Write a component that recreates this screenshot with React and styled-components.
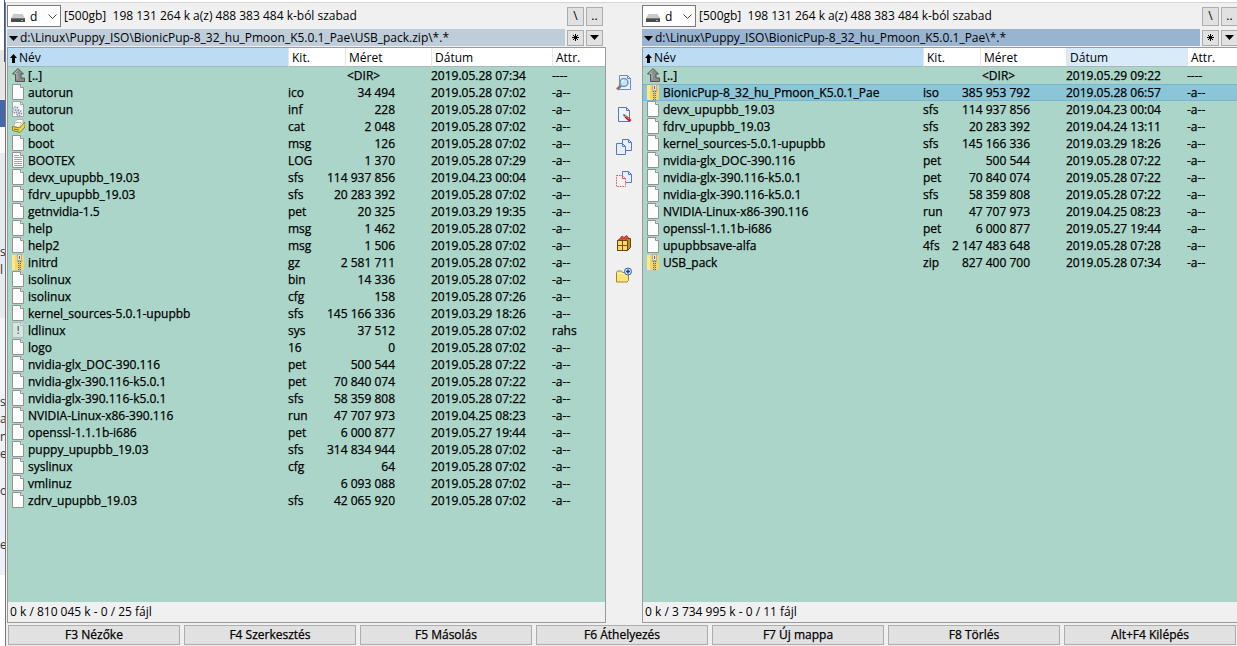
import React from "react";
import styled, { createGlobalStyle, css } from "styled-components";

const GlobalStyle = createGlobalStyle`
  *, *::before, *::after { box-sizing: border-box; }
  body {
    margin: 0;
    background: #fff;
    color: #000;
    font: 12px/16px "Open Sans", "Noto Sans", sans-serif;
    font-variant-ligatures: none;
    overflow: hidden;
  }
  button, select { font: inherit; color: inherit; }
`;

const Screen = styled.div`
  display: flex;
  min-height: 100vh;
  margin-right: -4px;
`;

const Backdrop = styled.div`
  flex: none;
  width: 5px;
  padding-bottom: 71px;
  display: flex;
  flex-direction: column;
`;

const Strip = styled.div`
  flex: none;
  height: ${(p) => p.$height}px;
  background: ${(p) => p.$color};
  border-right: ${(p) => (p.$edge ? "1px solid #3d5798" : "0")};
  color: #333;
  overflow: hidden;
  white-space: nowrap;
  line-height: 18px;
`;

const Window = styled.main`
  flex: 1;
  min-width: 0;
  display: flex;
  flex-direction: column;
  margin-top: 2px;
  padding: 2px 0 1px 1px;
  background: #f0f0f0;
  border-top: 1px solid #d4d4d4;
  border-left: 1px solid #777;
`;

const Panes = styled.div`
  flex: 1;
  display: flex;
`;

const Pane = styled.section`
  flex: 1;
  min-width: 0;
  display: flex;
  flex-direction: column;
`;

const DriveBar = styled.div`
  display: flex;
  align-items: center;
  height: 22px;
  gap: 2px;
  padding-right: 3px;
`;

const DriveBox = styled.label`
  position: relative;
  width: 54px;
  height: 22px;
  margin-right: 1px;

  svg { position: absolute; pointer-events: none; }
  svg:first-of-type { left: 4px; top: 9px; }
  svg:last-of-type { right: 4px; top: 8px; }
`;

const DriveSelect = styled.select`
  appearance: none;
  width: 100%;
  height: 100%;
  padding: 1px 16px 0 22px;
  background: #fff;
  border: 1px solid #7a7a7a;
  border-radius: 0;
`;

const FreeSpace = styled.span`
  flex: 1;
  white-space: pre;
`;

const PathRow = styled.div`
  display: flex;
  align-items: center;
  gap: 2px;
  height: 17px;
  margin: 2px 0 1px;
  padding-right: 3px;
`;

const PathBar = styled.button`
  flex: 1;
  min-width: 0;
  height: 17px;
  display: flex;
  align-items: center;
  gap: 2px;
  padding: 0 2px;
  border: 0;
  background: ${(p) => (p.$active ? "#99b4d1" : "#bfcddb")};
  white-space: nowrap;

  svg { margin-top: 2px; }
`;

const SmallButton = styled.button`
  flex: none;
  width: 17px;
  height: ${(p) => (p.$tall ? 19 : 16)}px;
  display: flex;
  align-items: center;
  justify-content: center;
  padding: 0;
  border: 1px solid #adadad;
  background: #e1e1e1;
`;

const Frame = styled.div`
  flex: 1;
  display: flex;
  flex-direction: column;
  border: 1px solid #9a9a9a;
`;

const ListArea = styled.div`
  flex: 1;
  background: #abd5c9;
`;

const FileTable = styled.table`
  width: 100%;
  table-layout: fixed;
  border-collapse: separate;
  border-spacing: 0;
  white-space: nowrap;
`;

const Column = styled.col`
  width: ${(p) => (p.$width ? `${p.$width}px` : "auto")};
`;

const HeadCell = styled.th`
  height: 19px;
  padding: 1px 3px 0;
  border-bottom: 1px solid #a8b8b8;
  border-left: ${(p) => (p.$first ? "0" : "1px solid #e5e5e5")};
  background: ${(p) => (p.$first ? "#bbdcf3" : p.$hover ? "#d9ebf9" : "#fff")};
  font-weight: 400;
  text-align: left;

  svg { margin-right: 2px; vertical-align: -1px; }
  ${(p) => p.$first && css`padding-left: 2px;`}
`;

const Row = styled.tr`
  -webkit-text-stroke: 0.25px #000;
  ${(p) =>
    p.$selected &&
    css`
      background: #8bc5d8;
      td { box-shadow: inset 0 1px #78b5cf, inset 0 -1px #78b5cf; }
    `}
`;

const Cell = styled.td`
  height: 17px;
  padding: 0;
  line-height: 17px;
`;

const NameBox = styled.div`
  display: flex;
  height: 17px;
  gap: 3px;
  padding-left: 4px;
  svg { flex: none; }
`;

const SizeBox = styled.div`
  display: flex;
  justify-content: ${(p) => (p.$dir ? "flex-start" : "flex-end")};
  padding: ${(p) => (p.$dir ? "0 0 0 2px" : "0 36px 0 0")};
`;

const Status = styled.div`
  height: 20px;
  padding: 2px 2px 0;
`;

const ToolColumn = styled.nav`
  flex: none;
  width: 36px;
  display: flex;
  flex-direction: column;
  align-items: center;
  gap: 16px;
  padding-top: 70px;
`;

const ToolButton = styled.button`
  width: 16px;
  height: 16px;
  padding: 0;
  border: 0;
  background: none;
  margin-top: ${(p) => (p.$group ? "32px" : "0")};
  svg { display: block; }
`;

const KeyBar = styled.footer`
  display: grid;
  grid-template-columns: repeat(7, 1fr);
  gap: 4px;
  padding: 2px 5px 0 1px;
`;

const KeyButton = styled.button`
  height: 20px;
  padding: 0;
  line-height: 16px;
  border: 1px solid #adadad;
  background: #e1e1e1;
  -webkit-text-stroke: 0.25px #000;
`;

const DriveIcon = () => (
  <svg width="14" height="8" viewBox="0 0 14 8">
    <path d="M2.5 0h9L14 4H0z" fill="#c9c9c9" />
    <path d="M0 4h14v4H0z" fill="#4b4b4b" />
    <path d="M0 4h14v1H0z" fill="#777" />
    <path d="M10 6h2v1h-2z" fill="#7fd77f" />
  </svg>
);

const Chevron = () => (
  <svg width="9" height="7" viewBox="0 0 9 7">
    <path d="M.5 1.5l4 4 4-4" fill="none" stroke="#444" />
  </svg>
);

const Triangle = () => (
  <svg width="9" height="5" viewBox="0 0 9 5">
    <path d="M0 0h9L4.500 5z" />
  </svg>
);

const SortArrow = () => (
  <svg width="7" height="9" viewBox="0 0 7 9">
    <path d="M3.500 0L7 4H5v5H2V4H0z" />
  </svg>
);

const Sheet = ({ fill = "#fdfdfd", stroke = "#929292", children }) => (
  <svg width="13" height="17" viewBox="0 0 13 17">
    <path d="M.5.5h8l3 3v12H.5z" fill={fill} stroke={stroke} />
    <path d="M8.500.5v3h3" fill="#eee" stroke={stroke} />
    {children}
  </svg>
);

const icons = {
  file: <Sheet />,
  text: (
    <Sheet>
      <path d="M2 3.500h5M2 5.500h8M2 7.500h8M2 9.500h8M2 11.500h8M2 13.500h8" stroke="#a5a5a5" />
    </Sheet>
  ),
  system: (
    <Sheet fill="#d5e5df" stroke="#b0b9b6">
      <path d="M5.500 4h1.500v5H5.500zM5.500 10.500h1.500V12H5.500z" fill="#777" />
    </Sheet>
  ),
  config: (
    <svg width="13" height="17" viewBox="0 0 13 17">
      <path d="M.5.5h8l3 3v12H.5z" fill="#f7f9fa" stroke="#a5a5a5" />
      <path d="M8.500.5v3h3" fill="none" stroke="#a5a5a5" />
      <circle cx="3.500" cy="9" r="3" fill="#e5edf2" stroke="#8494a0" strokeWidth="1.500" strokeDasharray="1.500 1" />
      <circle cx="7" cy="12" r="2.500" fill="#e5edf2" stroke="#8494a0" strokeWidth="1.500" strokeDasharray="1.500 1" />
      <circle cx="3.500" cy="9" r="1" fill="#8798a5" />
      <circle cx="7" cy="12" r="1" fill="#8798a5" />
    </svg>
  ),
  catalog: (
    <svg width="13" height="17" viewBox="0 0 13 17">
      <path d="M2.500 9V3.500l3-2h5.500V9z" fill="#fff" stroke="#b5b5a8" />
      <path d="M1.500 8.500l2-4h6l-2 5z" fill="#fffef0" stroke="#c5c09b" />
      <path d="M.5 8.500l7 1.500L13 4v5l-5 5.500-7.500-2z" fill="#ead94c" stroke="#8c8220" />
      <path d="M2 11l5 1.200" stroke="#756e20" />
    </svg>
  ),
  zip: (
    <svg width="13" height="17" viewBox="0 0 13 17">
      <path d="M0 1h12v15H0z" fill="#f7d664" />
      <path d="M0 1h3v15H0z" fill="#ffe88c" />
      <path d="M5 0h5v8H5z" fill="#b0b0a6" />
      <path d="M6 1h3v5H6z" fill="#e3e3dd" />
      <path d="M7.500 2v3" stroke="#666" />
      <path d="M7.500 7v10" stroke="#6c6c60" strokeWidth="3" strokeDasharray="1 1" />
      <path d="M7.500 7v10" stroke="#bab69b" />
    </svg>
  ),
  up: (
    <svg width="13" height="17" viewBox="0 0 13 17">
      <path d="M6 1.500L11.500 7H9v4h3.500v3.500h-9V7H.5z" fill="#8c8c8c" stroke="#555" />
      <path d="M6 3L2.500 6.500H5v6" fill="none" stroke="#b5b5b5" />
    </svg>
  ),
};

const PageShape = ({ x = 0, y = 0, stroke = "#5878c8", fill = "#e8f0ff", dash }) => (
  <g transform={`translate(${x} ${y})`}>
    <path d="M.5.5h6l3 3v8h-9z" fill={fill} stroke={stroke} strokeDasharray={dash} />
    <path d="M6.500.5v3h3" fill="none" stroke={stroke} />
  </g>
);

const tools = [
  {
    label: "Nézőke",
    icon: (
      <>
        <path d="M3.500.5h8l3 3v11h-11z" fill="#edf4ff" stroke="#6c88d0" />
        <path d="M11.500.5v3h3" fill="none" stroke="#6c88d0" />
        <path d="M1 14.500l4-4" stroke="#8c7863" strokeWidth="3" />
        <circle cx="8" cy="7.500" r="4" fill="#bfe3f7" stroke="#7893b5" strokeWidth="1.500" />
        <path d="M6 7q0-2 2-2" fill="none" stroke="#fff" />
      </>
    ),
  },
  {
    label: "Szerkesztés",
    icon: (
      <>
        <path d="M2.500.5h8l3 3v11h-11z" fill="#edf4ff" stroke="#5875c8" />
        <path d="M10.500.5v3h3" fill="none" stroke="#5875c8" />
        <path d="M9.500 9.500l5 4.500" stroke="#c91820" strokeWidth="3" />
        <path d="M9.500 9l4 3.500" stroke="#f07870" />
        <path d="M7 7l1 3 2-2z" fill="#554" />
      </>
    ),
  },
  {
    label: "Másolás",
    icon: (
      <>
        <PageShape x={6} y={0} />
        <PageShape x={0} y={4} />
      </>
    ),
  },
  {
    label: "Áthelyezés",
    icon: (
      <>
        <PageShape x={6} y={0} />
        <PageShape x={0} y={4} stroke="#e05068" fill="#faf0f2" dash="1.500 1" />
      </>
    ),
  },
  {
    label: "Tömörítés",
    group: true,
    icon: (
      <>
        <path d="M1.500 5.500l3-2h10v9l-3 3h-10z" fill="#c58b18" stroke="#604515" />
        <path d="M1.500 5.500h10v10h-10z" fill="#ffd76a" stroke="#604515" />
        <path d="M6.500 5.500v10M1.500 10.500h10" stroke="#795417" />
        <path d="M4 3.500L6 1l2 1.500L10.500.5l2 2-2 2-2.500-1-3 1z" fill="#ef4545" stroke="#b93a3a" />
      </>
    ),
  },
  {
    label: "Új mappa",
    icon: (
      <>
        <path d="M.5 5.500l1-1.500h4l1 1.500h6v8l-1.500 1.500H.5z" fill="#ffe47d" stroke="#a18438" />
        <path d="M1.500 6.500h10" stroke="#fff3b5" />
        <circle cx="12" cy="4.500" r="3.500" fill="#d8ecff" stroke="#385b9c" />
        <path d="M12 2.500v4M10 4.500h4" stroke="#173f91" strokeWidth="1.500" />
      </>
    ),
  },
];

const leftFiles = [
  ["up", "[..]", "", "<DIR>", "2019.05.28 07:34", "----"],
  ["file", "autorun", "ico", "34 494", "2019.05.28 07:02", "-a--"],
  ["config", "autorun", "inf", "228", "2019.05.28 07:02", "-a--"],
  ["catalog", "boot", "cat", "2 048", "2019.05.28 07:02", "-a--"],
  ["file", "boot", "msg", "126", "2019.05.28 07:02", "-a--"],
  ["text", "BOOTEX", "LOG", "1 370", "2019.05.28 07:29", "-a--"],
  ["file", "devx_upupbb_19.03", "sfs", "114 937 856", "2019.04.23 00:04", "-a--"],
  ["file", "fdrv_upupbb_19.03", "sfs", "20 283 392", "2019.05.28 07:02", "-a--"],
  ["file", "getnvidia-1.5", "pet", "20 325", "2019.03.29 19:35", "-a--"],
  ["file", "help", "msg", "1 462", "2019.05.28 07:02", "-a--"],
  ["file", "help2", "msg", "1 506", "2019.05.28 07:02", "-a--"],
  ["zip", "initrd", "gz", "2 581 711", "2019.05.28 07:02", "-a--"],
  ["file", "isolinux", "bin", "14 336", "2019.05.28 07:02", "-a--"],
  ["file", "isolinux", "cfg", "158", "2019.05.28 07:26", "-a--"],
  ["file", "kernel_sources-5.0.1-upupbb", "sfs", "145 166 336", "2019.03.29 18:26", "-a--"],
  ["system", "ldlinux", "sys", "37 512", "2019.05.28 07:02", "rahs"],
  ["file", "logo", "16", "0", "2019.05.28 07:02", "-a--"],
  ["file", "nvidia-glx_DOC-390.116", "pet", "500 544", "2019.05.28 07:22", "-a--"],
  ["file", "nvidia-glx-390.116-k5.0.1", "pet", "70 840 074", "2019.05.28 07:22", "-a--"],
  ["file", "nvidia-glx-390.116-k5.0.1", "sfs", "58 359 808", "2019.05.28 07:22", "-a--"],
  ["file", "NVIDIA-Linux-x86-390.116", "run", "47 707 973", "2019.04.25 08:23", "-a--"],
  ["file", "openssl-1.1.1b-i686", "pet", "6 000 877", "2019.05.27 19:44", "-a--"],
  ["file", "puppy_upupbb_19.03", "sfs", "314 834 944", "2019.05.28 07:02", "-a--"],
  ["file", "syslinux", "cfg", "64", "2019.05.28 07:02", "-a--"],
  ["file", "vmlinuz", "", "6 093 088", "2019.05.28 07:02", "-a--"],
  ["file", "zdrv_upupbb_19.03", "sfs", "42 065 920", "2019.05.28 07:02", "-a--"],
];

const rightFiles = [
  ["up", "[..]", "", "<DIR>", "2019.05.29 09:22", "----"],
  ["zip", "BionicPup-8_32_hu_Pmoon_K5.0.1_Pae", "iso", "385 953 792", "2019.05.28 06:57", "-a--"],
  ["file", "devx_upupbb_19.03", "sfs", "114 937 856", "2019.04.23 00:04", "-a--"],
  ["file", "fdrv_upupbb_19.03", "sfs", "20 283 392", "2019.04.24 13:11", "-a--"],
  ["file", "kernel_sources-5.0.1-upupbb", "sfs", "145 166 336", "2019.03.29 18:26", "-a--"],
  ["file", "nvidia-glx_DOC-390.116", "pet", "500 544", "2019.05.28 07:22", "-a--"],
  ["file", "nvidia-glx-390.116-k5.0.1", "pet", "70 840 074", "2019.05.28 07:22", "-a--"],
  ["file", "nvidia-glx-390.116-k5.0.1", "sfs", "58 359 808", "2019.05.28 07:22", "-a--"],
  ["file", "NVIDIA-Linux-x86-390.116", "run", "47 707 973", "2019.04.25 08:23", "-a--"],
  ["file", "openssl-1.1.1b-i686", "pet", "6 000 877", "2019.05.27 19:44", "-a--"],
  ["file", "upupbbsave-alfa", "4fs", "2 147 483 648", "2019.05.28 07:28", "-a--"],
  ["zip", "USB_pack", "zip", "827 400 700", "2019.05.28 07:34", "-a--"],
];

const strips = [
  { height: 50, color: "#fff", edge: true },
  { height: 12, color: "#e6e6e6", edge: true },
  { height: 38, color: "#e6e6e6" },
  { height: 27, color: "#4668a8" },
  { height: 26, color: "#fafafa" },
  { height: 90, color: "#e6ebf2" },
  { height: 18, color: "#e6ebf2", text: "s" },
  { height: 57, color: "#e6ebf2", text: "l" },
  { height: 75, color: "#f2f4f9" },
  { height: 17, color: "#eef1f8", text: "s" },
  { height: 18, color: "#eef1f8", text: "a" },
  { height: 17, color: "#eef1f8", text: "n" },
  { height: 37, color: "#eef1f8", text: "e" },
  { height: 54, color: "#eef1f8", text: "o" },
  { height: 39, color: "#eef1f8", text: "e" },
];

const keys = [
  "F3 Nézőke",
  "F4 Szerkesztés",
  "F5 Másolás",
  "F6 Áthelyezés",
  "F7 Új mappa",
  "F8 Törlés",
  "Alt+F4 Kilépés",
];

function FilePane({ name, path, files, status, active, selected, hoverDate }) {
  return (
    <Pane aria-label={name}>
      <DriveBar>
        <DriveBox>
          <DriveSelect aria-label="Meghajtó" defaultValue="d">
            <option value="d">d</option>
          </DriveSelect>
          <DriveIcon />
          <Chevron />
        </DriveBox>
        <FreeSpace>{"[500gb]  198 131 264 k a(z) 488 383 484 k-ból szabad"}</FreeSpace>
        <SmallButton $tall>\</SmallButton>
        <SmallButton $tall>..</SmallButton>
      </DriveBar>
      <PathRow>
        <PathBar $active={active}>
          <Triangle />
          {path}
        </PathBar>
        <SmallButton aria-label="Kedvencek">
          <svg width="7" height="7" viewBox="0 0 7 7">
            <path d="M3.500 0v7M0 3.500h7M1 1l5 5M6 1L1 6" stroke="#000" />
          </svg>
        </SmallButton>
        <SmallButton aria-label="Előzmények">
          <Triangle />
        </SmallButton>
      </PathRow>
      <Frame>
        <ListArea>
          <FileTable>
            <colgroup>
              <Column />
              <Column $width={57} />
              <Column $width={86} />
              <Column $width={121} />
              <Column $width={53} />
            </colgroup>
            <thead>
              <tr>
                <HeadCell $first>
                  <SortArrow />
                  Név
                </HeadCell>
                <HeadCell>Kit.</HeadCell>
                <HeadCell>Méret</HeadCell>
                <HeadCell $hover={hoverDate}>Dátum</HeadCell>
                <HeadCell>Attr.</HeadCell>
              </tr>
            </thead>
            <tbody>
              {files.map(([icon, file, ext, size, date, attr], i) => (
                <Row key={i} $selected={i === selected}>
                  <Cell>
                    <NameBox>
                      {icons[icon]}
                      {file}
                    </NameBox>
                  </Cell>
                  <Cell>{ext}</Cell>
                  <Cell>
                    <SizeBox $dir={size === "<DIR>"}>{size}</SizeBox>
                  </Cell>
                  <Cell>{date}</Cell>
                  <Cell>{attr}</Cell>
                </Row>
              ))}
            </tbody>
          </FileTable>
        </ListArea>
        <Status>{status}</Status>
      </Frame>
    </Pane>
  );
}

export default function App() {
  return (
    <>
      <GlobalStyle />
      <Screen>
        <Backdrop aria-hidden="true">
          {strips.map((s, i) => (
            <Strip key={i} $height={s.height} $color={s.color} $edge={s.edge}>
              {s.text}
            </Strip>
          ))}
        </Backdrop>
        <Window>
          <Panes>
            <FilePane
              name="Bal panel"
              path="d:\Linux\Puppy_ISO\BionicPup-8_32_hu_Pmoon_K5.0.1_Pae\USB_pack.zip\*.*"
              files={leftFiles}
              status="0 k / 810 045 k - 0 / 25 fájl"
            />
            <ToolColumn>
              {tools.map((t) => (
                <ToolButton key={t.label} aria-label={t.label} $group={t.group}>
                  <svg width="16" height="16" viewBox="0 0 16 16">
                    {t.icon}
                  </svg>
                </ToolButton>
              ))}
            </ToolColumn>
            <FilePane
              name="Jobb panel"
              path="d:\Linux\Puppy_ISO\BionicPup-8_32_hu_Pmoon_K5.0.1_Pae\*.*"
              files={rightFiles}
              status="0 k / 3 734 995 k - 0 / 11 fájl"
              active
              selected={1}
              hoverDate
            />
          </Panes>
          <KeyBar>
            {keys.map((k) => (
              <KeyButton key={k}>{k}</KeyButton>
            ))}
          </KeyBar>
        </Window>
      </Screen>
    </>
  );
}
